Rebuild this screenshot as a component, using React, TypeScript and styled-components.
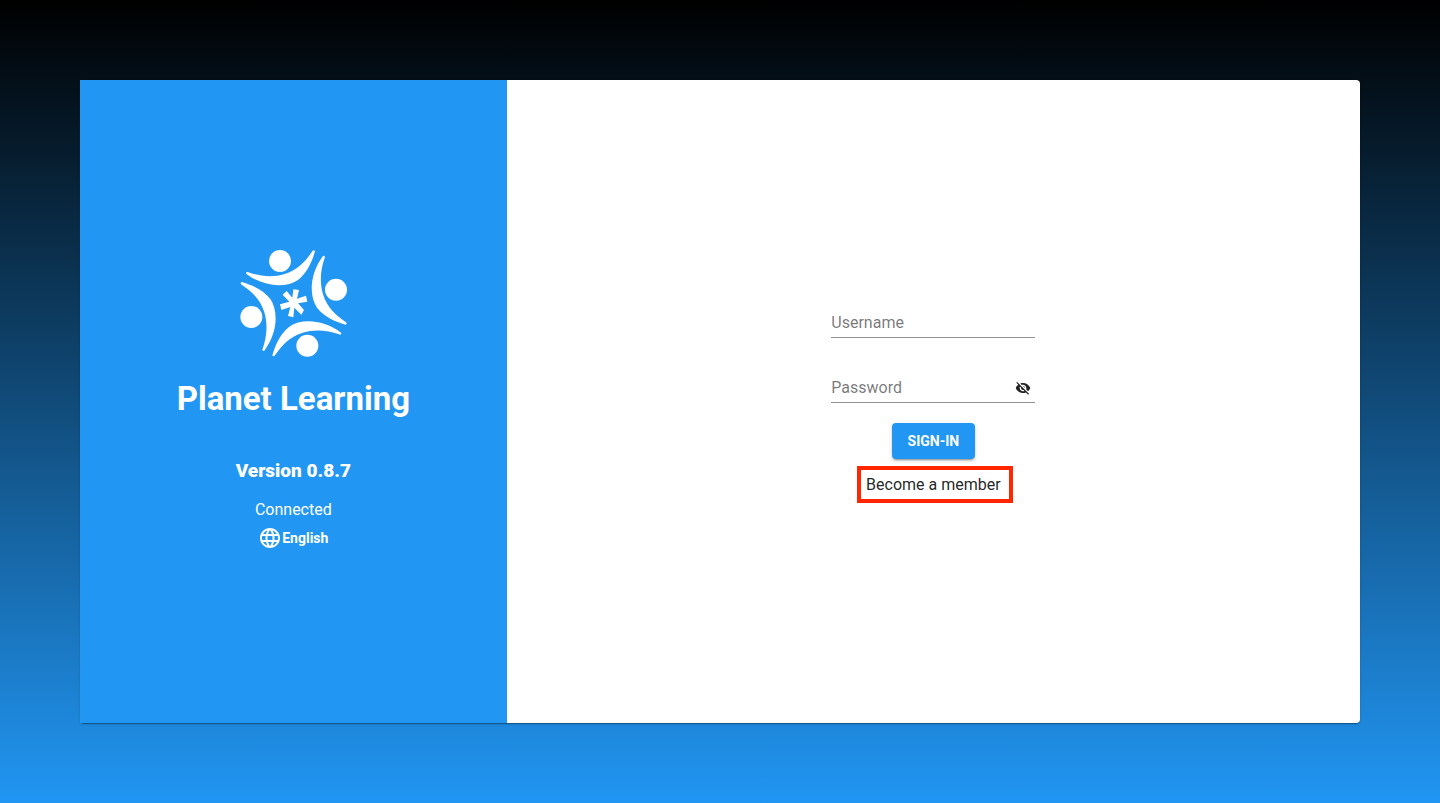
import React from "react";
import styled, { createGlobalStyle } from "styled-components";

const GlobalStyle = createGlobalStyle`
  *, *::before, *::after { box-sizing: border-box; }
  body {
    margin: 0;
    font-family: Roboto, "Liberation Sans", sans-serif;
    font-size: 16px;
    line-height: 24px;
    color: rgba(0, 0, 0, 0.87);
  }
`;

const Page = styled.main`
  display: grid;
  min-height: 100vh;
  padding: 80px;
  background: linear-gradient(#000, #2196f3);
`;

const Card = styled.div`
  display: grid;
  grid-template-columns: 1fr 2fr;
  background: #fff;
  border-radius: 4px;
  box-shadow: 0 2px 1px -1px rgba(0, 0, 0, 0.2), 0 1px 1px rgba(0, 0, 0, 0.14),
    0 1px 3px rgba(0, 0, 0, 0.12);
`;

const BrandPanel = styled.section`
  display: flex;
  flex-direction: column;
  align-items: center;
  justify-content: center;
  padding-bottom: 3px;
  background: #2196f3;
  color: #fff;
  text-align: center;
`;

const Logo = styled.svg`
  width: 107px;
  height: 107px;
  fill: currentColor;
`;

const Title = styled.h1`
  margin: 22px 0 0;
  font-size: 33px;
  line-height: 40px;
  font-weight: 700;
`;

const Version = styled.h2`
  margin: 36px 0 0;
  font-size: 19px;
  line-height: 32px;
  font-weight: 900;
`;

const Status = styled.p`
  margin: 11px 0 0;
`;

const LanguageButton = styled.button`
  display: flex;
  align-items: center;
  padding: 0;
  margin-top: 4px;
  border: 0;
  background: none;
  color: inherit;
  font: 700 14px/24px Roboto, sans-serif;
  cursor: pointer;

  svg {
    width: 24px;
    height: 24px;
    fill: currentColor;
  }
`;

const FormPanel = styled.section`
  display: flex;
  align-items: center;
  justify-content: center;
  padding-top: 4px;
`;

const Form = styled.form`
  display: flex;
  flex-direction: column;
  align-items: center;
  width: 204px;
`;

const Field = styled.div`
  display: flex;
  align-items: center;
  width: 100%;
  height: 33px;
  padding-top: 4px;
  margin-bottom: 32px;
  border-bottom: 1px solid rgba(0, 0, 0, 0.42);

  & + & {
    margin-bottom: 20px;
  }
`;

const Input = styled.input`
  flex: 1;
  min-width: 0;
  padding: 0;
  border: 0;
  outline: 0;
  background: none;
  color: inherit;
  font: 400 16px/24px Roboto, sans-serif;

  &::placeholder {
    color: rgba(0, 0, 0, 0.54);
    opacity: 1;
  }
`;

const IconButton = styled.button`
  display: grid;
  place-items: center;
  width: 24px;
  height: 24px;
  padding: 0;
  border: 0;
  background: none;
  color: inherit;
  cursor: pointer;

  svg {
    width: 16px;
    height: 16px;
    fill: currentColor;
  }
`;

const SubmitButton = styled.button`
  height: 36px;
  padding: 0 16px;
  border: 0;
  border-radius: 4px;
  background: #2196f3;
  color: #fff;
  font: 700 14px/36px Roboto, sans-serif;
  text-transform: uppercase;
  box-shadow: 0 3px 1px -2px rgba(0, 0, 0, 0.2), 0 2px 2px rgba(0, 0, 0, 0.14),
    0 1px 5px rgba(0, 0, 0, 0.12);
  cursor: pointer;
`;

const MemberLink = styled.a`
  margin: 7px 0 0 3px;
  padding: 3px 8px 2px 5px;
  border: 4px solid #ff2600;
  color: inherit;
  text-decoration: none;
  white-space: nowrap;
`;

const quarterTurns = [0, 90, 180, 270];

function PlanetLogo() {
  return (
    <Logo viewBox="30 29 321 321" aria-hidden="true">
      {quarterTurns.map((angle) => (
        <g key={angle} transform={`rotate(${angle} 191 189)`}>
          <circle cx="150" cy="62" r="33" />
          <path d="M48 98Q49 94 55 96C88 108 128 112 164 101C204 89 228 61 247 33Q252 27 255 33C246 65 231 98 204 119C169 143 104 142 49 101Z" />
        </g>
      ))}
      <path d="M190 147L207 149L201 175L228 166L232 184L204 189L222 209L214 223L193 202L190 231L174 227L181 200L154 209L150 192L178 184L158 163L170 152L187 172Z" />
    </Logo>
  );
}

export default function App() {
  return (
    <>
      <GlobalStyle />
      <Page>
        <Card>
          <BrandPanel>
            <PlanetLogo />
            <Title>Planet Learning</Title>
            <Version>Version 0.8.7</Version>
            <Status>Connected</Status>
            <LanguageButton type="button">
              <svg viewBox="0 0 24 24" aria-hidden="true">
                <path d="M11.99 2C6.47 2 2 6.48 2 12s4.47 10 9.99 10C17.52 22 22 17.52 22 12S17.52 2 11.99 2zm6.93 6h-2.95c-.32-1.25-.78-2.45-1.38-3.56 1.84.63 3.37 1.91 4.33 3.56zM12 4.04c.83 1.2 1.48 2.53 1.91 3.96h-3.82c.43-1.43 1.08-2.76 1.91-3.96zM4.26 14C4.1 13.36 4 12.69 4 12s.1-1.36.26-2h3.38c-.08.66-.14 1.32-.14 2 0 .68.06 1.34.14 2H4.26zm.82 2h2.95c.32 1.25.78 2.45 1.38 3.56-1.84-.63-3.37-1.9-4.33-3.56zm2.95-8H5.08c.96-1.66 2.49-2.93 4.33-3.56C8.81 5.55 8.35 6.75 8.03 8zM12 19.96c-.83-1.2-1.48-2.53-1.91-3.96h3.82c-.43 1.43-1.08 2.76-1.91 3.96zM14.34 14H9.66c-.09-.66-.16-1.32-.16-2 0-.68.07-1.35.16-2h4.68c.09.65.16 1.32.16 2 0 .68-.07 1.34-.16 2zm.25 5.56c.6-1.11 1.06-2.31 1.38-3.56h2.95c-.96 1.65-2.49 2.93-4.33 3.56zM16.36 14c.08-.66.14-1.32.14-2 0-.68-.06-1.34-.14-2h3.38c.16.64.26 1.31.26 2s-.1 1.36-.26 2h-3.38z" />
              </svg>
              English
            </LanguageButton>
          </BrandPanel>
          <FormPanel>
            <Form>
              <Field>
                <Input type="text" aria-label="Username" placeholder="Username" />
              </Field>
              <Field>
                <Input type="password" aria-label="Password" placeholder="Password" />
                <IconButton type="button" aria-label="Show password">
                  <svg viewBox="0 0 24 24" aria-hidden="true">
                    <path d="M12 7c2.76 0 5 2.24 5 5 0 .65-.13 1.26-.36 1.83l2.92 2.92c1.51-1.26 2.7-2.89 3.43-4.75-1.73-4.39-6-7.5-11-7.5-1.4 0-2.74.25-3.98.7l2.16 2.16C10.74 7.13 11.35 7 12 7zM2 4.27l2.28 2.28.46.46C3.08 8.3 1.78 10.02 1 12c1.73 4.39 6 7.5 11 7.5 1.55 0 3.03-.3 4.38-.84l.42.42L19.73 22 21 20.73 3.27 3 2 4.27zM7.53 9.8l1.55 1.55c-.05.21-.08.43-.08.65 0 1.66 1.34 3 3 3 .22 0 .44-.03.65-.08l1.55 1.55c-.67.33-1.41.53-2.2.53-2.76 0-5-2.24-5-5 0-.79.2-1.53.53-2.2zm4.31-.78l3.15 3.15.02-.16c0-1.66-1.34-3-3-3l-.17.01z" />
                  </svg>
                </IconButton>
              </Field>
              <SubmitButton type="submit">Sign-In</SubmitButton>
              <MemberLink href="#become-a-member">Become a member</MemberLink>
            </Form>
          </FormPanel>
        </Card>
      </Page>
    </>
  );
}
